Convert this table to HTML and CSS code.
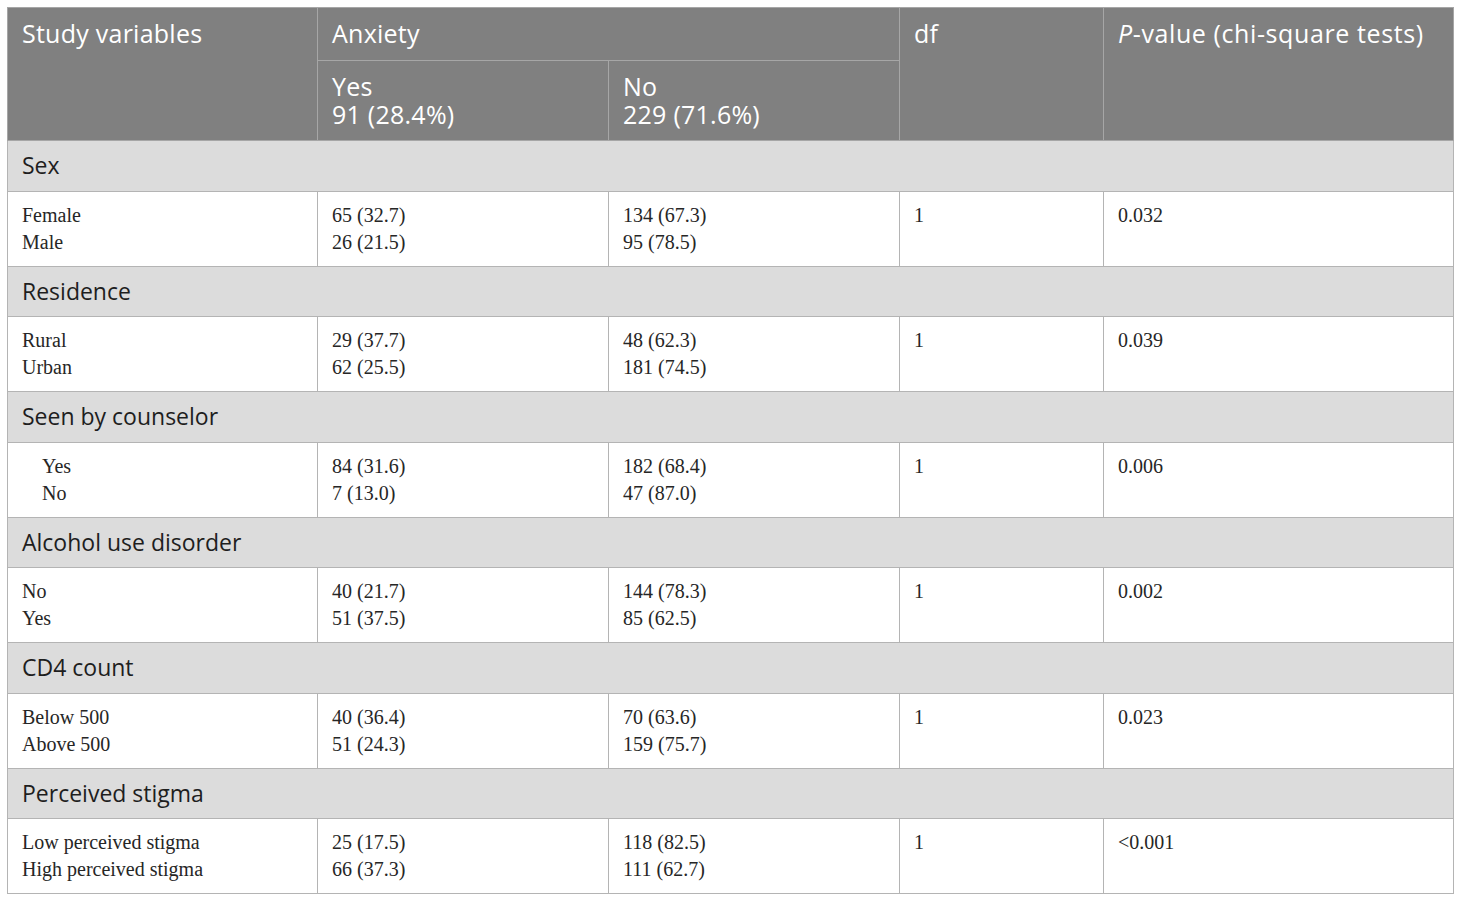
FILE: index.html
```html
<!DOCTYPE html>
<html lang="en">
<head>
<meta charset="utf-8">
<title>Anxiety table</title>
<link rel="stylesheet" href="styles.css">
</head>
<body>
<table class="tbl">
  <colgroup>
    <col class="c1"><col class="c2"><col class="c3"><col class="c4"><col class="c5">
  </colgroup>
  <thead>
    <tr class="h1">
      <th rowspan="2">Study variables</th>
      <th colspan="2">Anxiety</th>
      <th rowspan="2">df</th>
      <th rowspan="2" class="pv"><i>P</i>-value (chi-square tests)</th>
    </tr>
    <tr class="h2">
      <th>Yes<br>91 (28.4%)</th>
      <th>No<br>229 (71.6%)</th>
    </tr>
  </thead>
  <tbody>
    <tr class="cat"><td colspan="5">Sex</td></tr>
    <tr class="data">
      <td>Female<br>Male</td>
      <td>65 (32.7)<br>26 (21.5)</td>
      <td>134 (67.3)<br>95 (78.5)</td>
      <td>1</td>
      <td>0.032</td>
    </tr>
    <tr class="cat"><td colspan="5">Residence</td></tr>
    <tr class="data">
      <td>Rural<br>Urban</td>
      <td>29 (37.7)<br>62 (25.5)</td>
      <td>48 (62.3)<br>181 (74.5)</td>
      <td>1</td>
      <td>0.039</td>
    </tr>
    <tr class="cat"><td colspan="5">Seen by counselor</td></tr>
    <tr class="data">
      <td class="indent">Yes<br>No</td>
      <td>84 (31.6)<br>7 (13.0)</td>
      <td>182 (68.4)<br>47 (87.0)</td>
      <td>1</td>
      <td>0.006</td>
    </tr>
    <tr class="cat"><td colspan="5">Alcohol use disorder</td></tr>
    <tr class="data">
      <td>No<br>Yes</td>
      <td>40 (21.7)<br>51 (37.5)</td>
      <td>144 (78.3)<br>85 (62.5)</td>
      <td>1</td>
      <td>0.002</td>
    </tr>
    <tr class="cat"><td colspan="5">CD4 count</td></tr>
    <tr class="data">
      <td>Below 500<br>Above 500</td>
      <td>40 (36.4)<br>51 (24.3)</td>
      <td>70 (63.6)<br>159 (75.7)</td>
      <td>1</td>
      <td>0.023</td>
    </tr>
    <tr class="cat"><td colspan="5">Perceived stigma</td></tr>
    <tr class="data">
      <td>Low perceived stigma<br>High perceived stigma</td>
      <td>25 (17.5)<br>66 (37.3)</td>
      <td>118 (82.5)<br>111 (62.7)</td>
      <td>1</td>
      <td>&lt;0.001</td>
    </tr>
  </tbody>
</table>
</body>
</html>
```
FILE: styles.css
```css
html, body {
  margin: 0;
  padding: 0;
  background: #ffffff;
}
body {
  padding: 7px 0 0 7px;
}
.tbl {
  border-collapse: collapse;
  table-layout: fixed;
  width: 1446px;
}
.c1 { width: 310px; }
.c2 { width: 291px; }
.c3 { width: 291px; }
.c4 { width: 204px; }
.c5 { width: 350px; }

.tbl th {
  background: #808080;
  color: #ffffff;
  font-family: "Open Sans", "Noto Sans", sans-serif;
  font-weight: 400;
  font-size: 25px;
  letter-spacing: 0.25px;
  line-height: 28px;
  text-align: left;
  vertical-align: top;
  padding: 11px 15px 0 14px;
  border: 1px solid #a6a6a6;
}
.tbl th.pv { letter-spacing: 0.6px; }
.tbl thead tr.h1 th { height: 41px; }
.tbl thead tr.h2 th { height: 68px; }

.tbl td {
  border: 1px solid #b4b4b4;
  vertical-align: top;
  text-align: left;
  padding: 10px 15px 0 14px;
  font-family: "Liberation Serif", "Times New Roman", serif;
  font-size: 20px;
  line-height: 27px;
  color: #262626;
}
.tbl tr.data td { height: 64px; }
.tbl tr.cat td {
  background: #dcdcdc;
  font-family: "Open Sans", "Noto Sans", sans-serif;
  font-size: 23px;
  line-height: 28px;
  color: #1e1e1e;
  height: 39.5px;
  padding-top: 10px;
}
.tbl td.indent { padding-left: 34px; }
```
